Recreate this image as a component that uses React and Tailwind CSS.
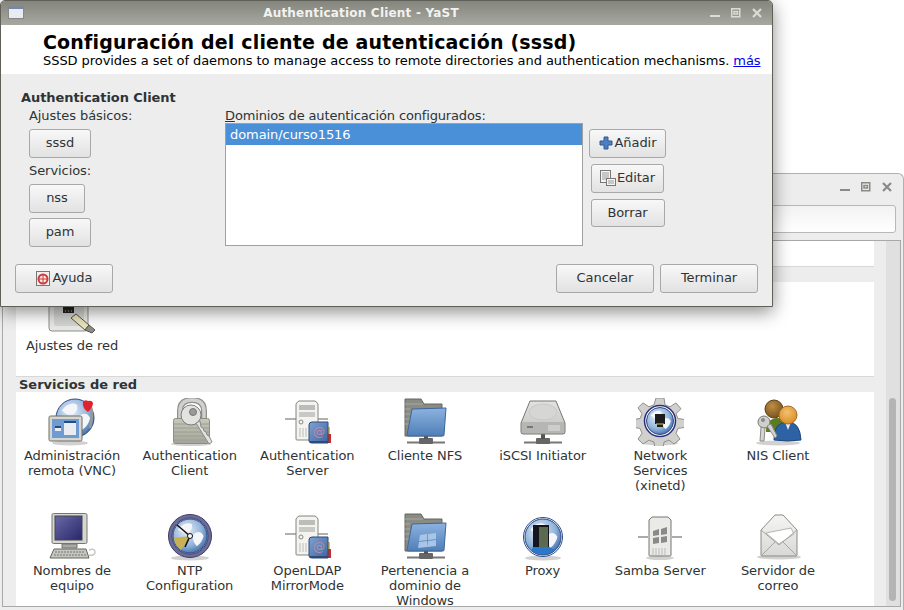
import React from "react";

const Shadow = ({ cx = 24, cy = 45, rx = 20, ry = 3 }) => (
  <ellipse cx={cx} cy={cy} rx={rx} ry={ry} fill="#000" opacity="0.18" />
);

const Globe = ({ id, cx, cy, r }) => (
  <g>
    <defs>
      <radialGradient id={id} cx="0.4" cy="0.35" r="0.75">
        <stop offset="0" stopColor="#e9eff7" />
        <stop offset="0.6" stopColor="#8fb2da" />
        <stop offset="1" stopColor="#2f5c9c" />
      </radialGradient>
    </defs>
    <circle cx={cx} cy={cy} r={r} fill={`url(#${id})`} stroke="#2c4a85" />
    <path
      d={`M${cx - r * 0.7} ${cy - r * 0.4}q${r * 0.4} ${-r * 0.5} ${r * 0.8} ${-r * 0.3}q${r * 0.1} ${r * 0.3} ${-r * 0.2} ${r * 0.5}q${-r * 0.3} ${r * 0.1} ${-r * 0.6} ${-r * 0.2}zM${cx + r * 0.2} ${cy - r * 0.1}q${r * 0.4} ${-r * 0.3} ${r * 0.6} ${r * 0.1}q${-r * 0.1} ${r * 0.4} ${-r * 0.4} ${r * 0.6}q${-r * 0.3} ${-r * 0.3} ${-r * 0.2} ${-r * 0.7}z`}
      fill="#f4f6f9"
    />
  </g>
);

const NetFoot = () => (
  <g>
    <path d="M5 44.5h38" stroke="#777" strokeWidth="2" />
    <path d="M5 43.5h38" stroke="#bbb" />
    <rect x="17" y="40" width="14" height="6" rx="1" fill="#666" />
    <rect x="22" y="36" width="4" height="5" fill="#555" />
  </g>
);

const VncIcon = () => (
  <svg width="48" height="48" viewBox="0 0 48 48">
    <Shadow cx={22} cy={45} rx={18} ry={2.5} />
    <Globe id="vncg" cx={27} cy={20} r={19} />
    <path d="M42 6q4 10 0 24" fill="none" stroke="#999" strokeWidth="2.5" />
    <path d="M35 4q2-3 5-1q4-1 5 2q0 4-5 9q-6-4-5-10z" fill="#e0222e" />
    <rect x="1" y="18" width="33" height="25" rx="1.5" fill="#d6d6d0" stroke="#6e6e6a" />
    <rect x="4" y="21" width="27" height="19" fill="#6f9bd1" />
    <rect x="16" y="23" width="12" height="14" fill="#e9edf2" />
    <rect x="16" y="23" width="12" height="2" fill="#264a85" />
    <rect x="7" y="28" width="6" height="5" fill="#e9edf2" />
    <rect x="7" y="28" width="6" height="2" fill="#264a85" />
  </svg>
);

const LockIcon = () => (
  <svg width="48" height="48" viewBox="0 0 48 48">
    <defs>
      <linearGradient id="lockb" x1="0" y1="0" x2="0" y2="1">
        <stop offset="0" stopColor="#c6c8bc" />
        <stop offset="1" stopColor="#a3a598" />
      </linearGradient>
    </defs>
    <Shadow cx={25} cy={46} rx={20} ry={2} />
    <path d="M14 22v-9q0-11 12-11t12 11v9" fill="none" stroke="#8f908a" strokeWidth="6" />
    <path d="M14 22v-9q0-11 12-11t12 11v9" fill="none" stroke="#d0d0cc" strokeWidth="3.5" />
    <rect x="7.5" y="20.5" width="36" height="25" rx="2" fill="url(#lockb)" stroke="#8c8d83" />
    <path d="M8 26h35M8 30h35M8 34h35M8 38h35M8 42h35" stroke="#9c9e92" />
    <circle cx="25" cy="17" r="10" fill="#e2e2e0" stroke="#7c7c78" />
    <circle cx="27" cy="14" r="3.5" fill="#9a9b95" stroke="#777" />
    <path d="M30 25l13 21l3-2l-3-6l-2-1l-1-3l-2-1l-1-3l-2-1l-1-6z" fill="#e4e4e2" stroke="#8a8a86" />
  </svg>
);

const ServerBook = ({ id }) => (
  <svg width="48" height="48" viewBox="0 0 48 48">
    <defs>
      <linearGradient id={id} x1="0" y1="0" x2="1" y2="1">
        <stop offset="0" stopColor="#7ea3d2" />
        <stop offset="1" stopColor="#3d669f" />
      </linearGradient>
    </defs>
    <path d="M2 21h11M35 21h10" stroke="#b0b0ac" strokeWidth="2" />
    <path d="M16 3q-2 1-3 3v35q0 1 1 1h20q1 0 1-1V6q-1-2-3-3z" fill="#f3f3f1" stroke="#85857f" />
    <rect x="16" y="7" width="16" height="5" fill="#bcbcb8" />
    <rect x="16" y="14" width="16" height="5" fill="#c8c8c4" />
    <circle cx="18" cy="24" r="2" fill="none" stroke="#888" />
    <path d="M17 30v9M20 30v9M23 30v9" stroke="#bbb" />
    <rect x="44" y="29" width="3" height="8" fill="#e8c020" />
    <rect x="44" y="36" width="5" height="9" rx="1" fill="#cc2a2a" />
    <path d="M29 24h16v21H29q-3 0-3-2V27q0-3 3-3z" fill={`url(#${id})`} stroke="#2e4a78" />
    <text x="36" y="38" fontSize="12" fill="#c985a8" textAnchor="middle" fontFamily="DejaVu Sans">@</text>
    <rect x="27" y="43" width="18" height="2" fill="#2e4a78" />
  </svg>
);

const FolderNet = ({ id, windows }) => (
  <svg width="48" height="48" viewBox="0 0 48 48">
    <defs>
      <linearGradient id={id} x1="0" y1="0" x2="0" y2="1">
        <stop offset="0" stopColor="#8cb2e0" />
        <stop offset="1" stopColor="#4f7fb8" />
      </linearGradient>
    </defs>
    <g transform="translate(1 0)">
      <NetFoot />
      <path d="M3 1h16l3 5h18v32H3z" fill="#8b8b86" stroke="#66665f" />
      <path d="M3 6h18M3 11h5M3 16h5M3 21h5M3 26h5" stroke="#a9a9a4" />
      <path d="M10 11l34-1l-2 27q0 1-1 1H6q-1 0-1-1z" fill={`url(#${id})`} stroke="#3e6697" />
      {windows && (
        <path d="M18 22l7-1v6l-8 1zM26 21l8-1v6l-8 1zM17 29l8-1v6l-9 1zM26 28l8-1v6l-9 1z" fill="#a9c5e6" />
      )}
    </g>
  </svg>
);

const DiskIcon = () => (
  <svg width="48" height="48" viewBox="0 0 48 48">
    <defs>
      <linearGradient id="disk" x1="0" y1="0" x2="0" y2="1">
        <stop offset="0" stopColor="#e2e2e0" />
        <stop offset="1" stopColor="#c3c3c0" />
      </linearGradient>
    </defs>
    <NetFoot />
    <path d="M11 3h26l9 22v9q0 2-2 2H4q-2 0-2-2v-9z" fill="url(#disk)" stroke="#77776f" />
    <ellipse cx="24" cy="14" rx="14" ry="8" fill="#d6d6d4" stroke="#c9c9c6" />
    <path d="M3 24h42v10q0 1-1 1H4q-1 0-1-1z" fill="#b6b6b2" />
    <rect x="8" y="28" width="6" height="2" fill="#777" />
    <path d="M30 27v6M32 27v6M34 27v6M36 27v6M38 27v6M40 27v6" stroke="#e4e4e2" />
  </svg>
);

const GearIcon = () => (
  <svg width="48" height="48" viewBox="0 0 48 48">
    <Shadow cx={24} cy={45} rx={18} ry={2.5} />
    <path
      d="M20 1h8l1 7l5 2l6-4l5 6l-5 5l2 5l7 1v8l-7 1l-2 5l4 6l-6 5l-5-4l-5 2l-1 7h-8l-1-7l-5-2l-6 4l-5-5l4-6l-2-5l-7-1v-8l7-1l2-5l-4-6l5-5l6 4l5-2z"
      transform="translate(0 -1) scale(1 0.98)"
      fill="#d0d0ce"
      stroke="#8e8e8a"
    />
    <circle cx="24" cy="23" r="15.5" fill="#fff" stroke="#2d2d7d" strokeWidth="1.5" />
    <Globe id="gearg" cx={24} cy={23} r={13.5} />
    <path d="M19 16h10v10h-2v3h-6v-3h-2z" fill="#1c1c1c" />
    <path d="M21 25v2M23 25v2M25 25v2M27 25v2" stroke="#d8c060" />
  </svg>
);

const NisIcon = () => (
  <svg width="48" height="48" viewBox="0 0 48 48">
    <defs>
      <radialGradient id="nish1" cx="0.4" cy="0.35" r="0.7">
        <stop offset="0" stopColor="#c08d44" />
        <stop offset="1" stopColor="#75501c" />
      </radialGradient>
      <radialGradient id="nish2" cx="0.45" cy="0.35" r="0.7">
        <stop offset="0" stopColor="#f5c06e" />
        <stop offset="1" stopColor="#d68a24" />
      </radialGradient>
    </defs>
    <Shadow cx={24} cy={45} rx={22} ry={2.5} />
    <path d="M12 34q0-14 12-14t12 14z" fill="#5c7a1f" />
    <circle cx="20" cy="11" r="9" fill="url(#nish1)" stroke="#5c3f14" />
    <path d="M20 42q-1-18 14-18q12 0 13 18q-14 2-27 0z" fill="#2d62a5" stroke="#1f477c" />
    <path d="M31 24l3 8l3-8z" fill="#eee" />
    <circle cx="34" cy="17" r="9" fill="url(#nish2)" stroke="#a86b18" />
    <circle cx="10" cy="24" r="6" fill="#cfcfcc" stroke="#777" />
    <circle cx="9" cy="22" r="2" fill="#888" />
    <path d="M7 29l-1 14h4l1-13zM13 28l8 12l2-2l-6-12z" fill="#d4d4d2" stroke="#8a8a86" />
  </svg>
);

const MonitorIcon = () => (
  <svg width="48" height="48" viewBox="0 0 48 48">
    <defs>
      <linearGradient id="scr" x1="0" y1="0" x2="1" y2="1">
        <stop offset="0" stopColor="#6a6aa8" />
        <stop offset="1" stopColor="#26266a" />
      </linearGradient>
    </defs>
    <g transform="translate(2 0)">
      <rect x="2" y="0.5" width="35" height="30" rx="1.5" fill="#d6d6d2" stroke="#77776f" />
      <rect x="5" y="3" width="27" height="24" fill="url(#scr)" stroke="#444" />
      <path d="M12 31h15v4H12z" fill="#a9a9a5" stroke="#77776f" />
      <path d="M4 36h32l3 9H0z" fill="#c5c5c1" stroke="#66665f" />
      <path d="M5 39h30M4 42h32" stroke="#77776f" strokeDasharray="2 1" />
      <path d="M39 37q6-2 6 2t-6 3" fill="none" stroke="#c8c8c4" strokeWidth="1.5" />
    </g>
  </svg>
);

const ClockIcon = () => (
  <svg width="48" height="48" viewBox="0 0 48 48">
    <Shadow cx={24} cy={45} rx={19} ry={2.5} />
    <circle cx="24" cy="23" r="21.5" fill="#6c6c98" stroke="#3d3d68" />
    <circle cx="24" cy="23" r="18" fill="#dbe4ee" stroke="#3d3d68" />
    <Globe id="clockg" cx={24} cy={23} r={17} />
    <path d="M24 23L8 25q1 8 7 12z" fill="#c7b152" />
    <path d="M24 23L11 12M24 23l-5 11" stroke="#111" strokeWidth="1.6" />
    <circle cx="24" cy="23" r="2.5" fill="#fff" stroke="#111" />
  </svg>
);

const ProxyIcon = () => (
  <svg width="48" height="48" viewBox="0 0 48 48">
    <Shadow cx={24} cy={45} rx={18} ry={2.5} />
    <circle cx="24" cy="24" r="19.5" fill="#fff" stroke="#2d4e8e" />
    <Globe id="proxyg" cx={24} cy={24} r={18} />
    <path d="M14 12h16v24l-9 2H14z" fill="#151520" />
    <path d="M20 14h9v20l-9 3z" fill="#5c6a52" />
    <path d="M12 38q12 7 24-1l-6-3H14z" fill="#2a78cc" />
  </svg>
);

const SambaIcon = () => (
  <svg width="48" height="48" viewBox="0 0 48 48">
    <Shadow cx={24} cy={45} rx={14} ry={2} />
    <path d="M2 24h10M36 24h10" stroke="#aaa" strokeWidth="2" />
    <path d="M16 4h16l3 3v35q0 1-1 1H14q-1 0-1-1V7z" fill="#eaeae8" stroke="#77776f" />
    <path d="M17 18l6-2v6l-6 1zM25 16l6-2v7l-6 1zM17 25l6-1v6l-6 1zM25 24l6-1v6l-6 1z" fill="#8a8a86" />
    <path d="M17 35v7M20 35v7M23 35v7M26 35v7M29 35v7" stroke="#bbb" />
  </svg>
);

const MailIcon = () => (
  <svg width="48" height="48" viewBox="0 0 48 48">
    <defs>
      <linearGradient id="mail" x1="0" y1="0" x2="0" y2="1">
        <stop offset="0" stopColor="#f5f5f4" />
        <stop offset="1" stopColor="#d8d8d5" />
      </linearGradient>
    </defs>
    <Shadow cx={25} cy={44} rx={22} ry={2.5} />
    <g transform="translate(3 0)">
      <path d="M4 17L18 2h8l14 15v25q0 1-1 1H5q-1 0-1-1z" fill="url(#mail)" stroke="#8a8a86" />
      <path d="M9 20l25-5l3 6l-15 10z" fill="#fff" stroke="#b5b5b2" />
      <path d="M4 17l18 15l18-15M4 43l14-14M40 43L26 29" fill="none" stroke="#a5a5a2" />
    </g>
  </svg>
);

const NetworkIcon = () => (
  <svg width="48" height="48" viewBox="0 0 48 48">
    <rect x="1" y="1" width="39" height="42" rx="3" fill="#e8e8e6" stroke="#8d8d89" />
    <rect x="6" y="6" width="30" height="32" rx="2" fill="#d4d4d2" />
    <rect x="15" y="19" width="11" height="6" fill="#222" />
    <path d="M17 23h1M20 23h1M23 23h1" stroke="#d8c060" />
    <path d="M23 30l5-4l13 11l-4 5z" fill="#e8e3ba" stroke="#55554d" />
    <path d="M37 42l4-5l6 5l-3 3z" fill="#8d8d89" stroke="#55554d" />
  </svg>
);

const rows = [
  [
    { icon: <VncIcon />, lines: ["Administración", "remota (VNC)"] },
    { icon: <LockIcon />, lines: ["Authentication", "Client"] },
    { icon: <ServerBook id="sb1" />, lines: ["Authentication", "Server"] },
    { icon: <FolderNet id="fn1" />, lines: ["Cliente NFS"] },
    { icon: <DiskIcon />, lines: ["iSCSI Initiator"] },
    { icon: <GearIcon />, lines: ["Network", "Services", "(xinetd)"] },
    { icon: <NisIcon />, lines: ["NIS Client"] },
  ],
  [
    { icon: <MonitorIcon />, lines: ["Nombres de", "equipo"] },
    { icon: <ClockIcon />, lines: ["NTP", "Configuration"] },
    { icon: <ServerBook id="sb2" />, lines: ["OpenLDAP", "MirrorMode"] },
    { icon: <FolderNet id="fn2" windows />, lines: ["Pertenencia a", "dominio de", "Windows"] },
    { icon: <ProxyIcon />, lines: ["Proxy"] },
    { icon: <SambaIcon />, lines: ["Samba Server"] },
    { icon: <MailIcon />, lines: ["Servidor de", "correo"] },
  ],
];

function Tile({ icon, lines }) {
  return (
    <div className="flex h-[115px] w-[112px] flex-col items-center text-center text-[13px] leading-[15px] tracking-[-0.07px] text-[#2e3436]">
      <div className="mb-[2px] h-[48px] w-[48px]">{icon}</div>
      {lines.map((line) => (
        <div key={line} className="whitespace-nowrap">{line}</div>
      ))}
    </div>
  );
}

function Btn({ className = "", children }) {
  return (
    <div
      className={`flex shrink-0 items-center justify-center rounded-[3px] border border-[#a8a8a8] bg-gradient-to-b from-[#f8f8f8] to-[#e2e2e2] pb-px text-[13px] text-[#2e3436] ${className}`}
    >
      {children}
    </div>
  );
}

function WinButtons({ color, gap }) {
  return (
    <div className={`flex items-center ${gap}`}>
      <svg width="10" height="10" viewBox="0 0 10 10">
        <rect x="0" y="7" width="10" height="2" fill={color} />
      </svg>
      <svg width="10" height="10" viewBox="0 0 10 10">
        <path d="M.75.75h8v8h-8z M3 3.5h3.5v2.5H3z" fill="none" stroke={color} strokeWidth="1.5" />
      </svg>
      <svg width="10" height="10" viewBox="0 0 10 10">
        <path d="M1 1l8 8M9 1L1 9" stroke={color} strokeWidth="2.2" />
      </svg>
    </div>
  );
}

function BackWindow() {
  return (
    <div className="absolute left-0 top-[173px] flex h-[437px] w-[904px] flex-col rounded-t-[6px] border-r border-t border-[#b0b0b0] bg-[#ededed]">
      <div className="flex h-[31px] shrink-0 items-center justify-end pb-[5px] pr-[11px]">
        <WinButtons color="#8a8a86" gap="gap-[11px]" />
      </div>
      <div className="flex h-[28px] shrink-0 justify-end pr-[7px]">
        <div className="w-[400px] rounded-[3px] border border-[#b8b8b8] bg-gradient-to-b from-[#f2f2f2] to-white" />
      </div>
      <div className="mx-[2px] mt-[7px] flex h-[367px] shrink-0 border border-[#a8a8a8] bg-[#ededed] pl-[13px]">
        <div className="w-[859px] overflow-hidden bg-white">
          <div className="h-[25px]" />
          <div className="h-[16px] border-t border-[#d8d8d8] bg-[#ededed]" />
          <div className="flex h-[94px] flex-col pt-[6px]">
            <Tile icon={<NetworkIcon />} lines={["Ajustes de red"]} />
          </div>
          <div className="h-[16px] border-t border-[#d8d8d8] bg-[#ededed] pl-[3px] text-[13px] font-bold leading-[16px] text-[#2e3436]">
            Servicios de red
          </div>
          <div className="pt-[6px]">
            {rows.map((row, i) => (
              <div key={i} className="flex gap-x-[5.67px]">
                {row.map((tile) => (
                  <Tile key={tile.lines.join()} icon={tile.icon} lines={tile.lines} />
                ))}
              </div>
            ))}
          </div>
        </div>
        <div className="flex w-[26px]">
          <div className="w-[12px] bg-[#ededed]" />
          <div className="flex-1 bg-[#e0e0e0] pl-[3px] pt-[157px]">
            <div className="h-[203px] w-[7px] rounded-[4px] bg-[#b4b4b4]" />
          </div>
        </div>
      </div>
    </div>
  );
}

function Dialog() {
  return (
    <div className="absolute left-0 top-0 flex h-[307px] w-[773px] flex-col overflow-hidden rounded-t-[5px] border border-[#5f6058] bg-[#ededed] shadow-[0_5px_18px_rgba(0,0,0,0.45)]">
      <div className="relative flex h-[24px] shrink-0 items-center bg-gradient-to-b from-[#84857d] to-[#a7a89f] pl-[7px] pr-[10px]">
        <svg width="16" height="14" viewBox="0 0 16 14">
          <rect x="0.5" y="0.5" width="15" height="12" fill="#e8ecf2" stroke="#888" />
          <rect x="1" y="1" width="14" height="2" fill="#6e88b8" />
        </svg>
        <div className="flex-1 pr-[12px] text-center text-[12px] font-bold tracking-[0.2px] text-[#f2f2f0]">
          Authentication Client - YaST
        </div>
        <WinButtons color="#dcdcd6" gap="gap-[11px]" />
      </div>
      <div className="h-[49px] shrink-0 bg-white pl-[42px] pt-[6px] text-black">
        <div className="text-[19px] font-bold leading-[22px] tracking-[0.17px]">
          Configuración del cliente de autenticación (sssd)
        </div>
        <div className="text-[13px] leading-[15px] tracking-[-0.06px]">
          SSSD provides a set of daemons to manage access to remote directories and authentication mechanisms.{" "}
          <span className="text-[#0000ee] underline">más</span>
        </div>
      </div>
      <div className="flex min-h-0 flex-1 flex-col px-[14px] text-[13px] tracking-[-0.07px] text-[#2e3436]">
        <div className="flex h-[189px] shrink-0 pl-[6px]">
          <div className="w-[204px] pt-[16px]">
            <div className="text-[13px] font-bold leading-[16px]">Authentication Client</div>
            <div className="pl-[8px]">
              <div className="mt-[2px] leading-[16px]">Ajustes básicos:</div>
              <Btn className="mt-[5px] h-[29px] w-[62px]">sssd</Btn>
              <div className="mt-[5px] leading-[16px]">Servicios:</div>
              <Btn className="mt-[5px] h-[29px] w-[56px]">nss</Btn>
              <Btn className="mt-[5px] h-[29px] w-[62px]">pam</Btn>
            </div>
          </div>
          <div className="pt-[34px]">
            <div className="leading-[15px] tracking-[-0.15px]">
              <span className="underline">D</span>ominios de autenticación configurados:
            </div>
            <div className="h-[123px] w-[358px] border border-[#a0a0a0] bg-white">
              <div className="h-[21px] bg-[#4a90d9] pl-[4px] leading-[21px] text-white">domain/curso1516</div>
            </div>
          </div>
          <div className="ml-[6px] flex w-[77px] flex-col items-center gap-[6px] pt-[55px]">
            <Btn className="h-[29px] w-[77px] gap-[2px]">
              <svg width="14" height="14" viewBox="0 0 14 14">
                <path d="M5 1h4v4h4v4H9v4H5V9H1V5h4z" fill="#4f7fbe" stroke="#2f5a94" />
              </svg>
              Añadir
            </Btn>
            <Btn className="h-[29px] w-[73px] gap-px">
              <svg width="16" height="16" viewBox="0 0 16 16">
                <rect x="0.5" y="0.5" width="10" height="12" fill="#f4f4f2" stroke="#777" />
                <path d="M2 3h7M2 5h7M2 7h7M2 9h4" stroke="#999" />
                <rect x="6.5" y="8.5" width="9" height="7" fill="#f4f4f2" stroke="#777" />
                <path d="M8 11h6M8 13h6" stroke="#999" />
              </svg>
              Editar
            </Btn>
            <Btn className="h-[28px] w-[74px]">Borrar</Btn>
          </div>
        </div>
        <div className="mt-px flex">
          <Btn className="h-[29px] w-[98px] gap-[3px]">
            <svg width="14" height="15" viewBox="0 0 14 15">
              <rect x="0.5" y="0.5" width="13" height="14" fill="#f0f0ee" stroke="#777" />
              <circle cx="7" cy="8" r="4.5" fill="none" stroke="#d03a3a" strokeWidth="2" />
              <path d="M7 3v10M2 8h10" stroke="#d03a3a" />
            </svg>
            Ayuda
          </Btn>
          <div className="flex-1" />
          <Btn className="h-[29px] w-[98px]">Cancelar</Btn>
          <Btn className="ml-[6px] h-[29px] w-[98px]">Terminar</Btn>
        </div>
      </div>
    </div>
  );
}

export default function App() {
  return (
    <div className="relative h-[610px] w-[904px] overflow-hidden bg-white font-['DejaVu_Sans',sans-serif]">
      <BackWindow />
      <Dialog />
    </div>
  );
}
